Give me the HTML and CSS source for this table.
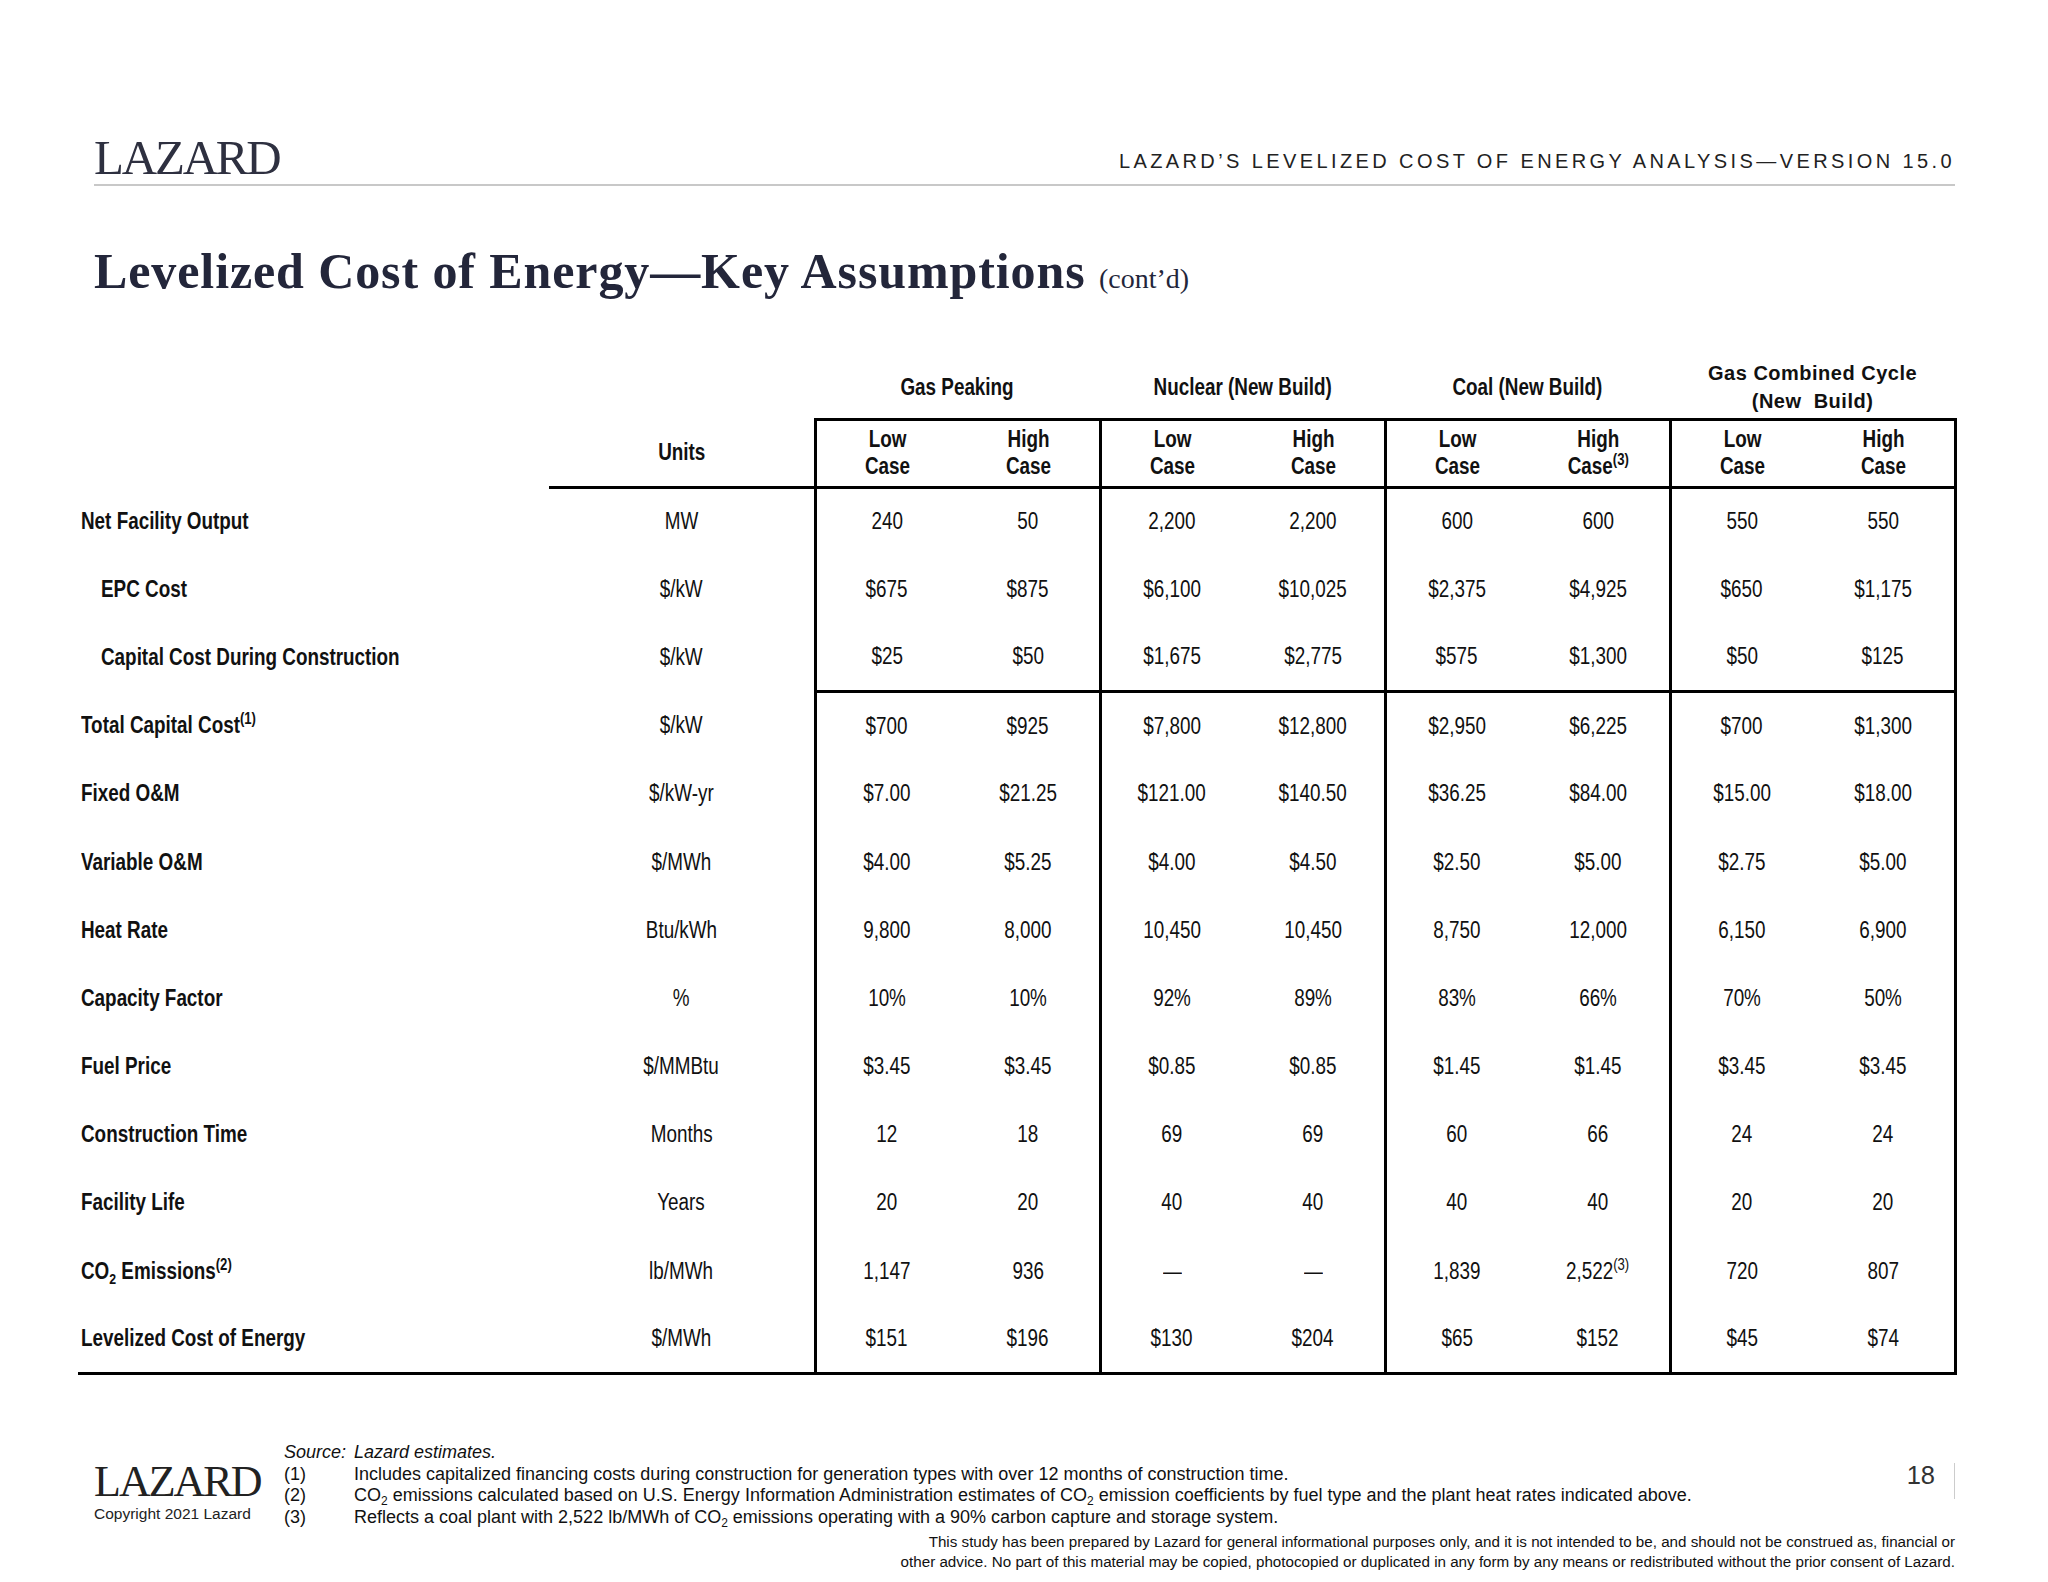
FILE: index.html
```html
<!DOCTYPE html>
<html lang="en">
<head>
<meta charset="utf-8">
<title>Levelized Cost of Energy—Key Assumptions (cont’d)</title>
<link rel="stylesheet" href="styles.css">
</head>
<body>
<div class="page">
  <header class="top">
    <div class="logo">LAZARD</div>
    <div class="doc-title">LAZARD’S LEVELIZED COST OF ENERGY ANALYSIS—VERSION 15.0</div>
  </header>

  <h1 class="title">Levelized Cost of Energy—Key Assumptions <span class="contd">(cont’d)</span></h1>

  <table class="assump">
    <colgroup>
      <col class="c-label">
      <col class="c-unit">
      <col class="c-val" span="8">
    </colgroup>
    <thead>
      <tr class="grp">
        <th></th>
        <th></th>
        <th colspan="2"><span>Gas Peaking</span></th>
        <th colspan="2"><span>Nuclear (New Build)</span></th>
        <th colspan="2"><span>Coal (New Build)</span></th>
        <th colspan="2" class="gcc">Gas Combined Cycle<br>(New&nbsp; Build)</th>
      </tr>
      <tr class="sub">
        <th class="blank"></th>
        <th class="units"><span>Units</span></th>
        <th><span>Low<br>Case</span></th>
        <th><span>High<br>Case</span></th>
        <th><span>Low<br>Case</span></th>
        <th><span>High<br>Case</span></th>
        <th><span>Low<br>Case</span></th>
        <th><span>High<br>Case<sup>(3)</sup></span></th>
        <th><span>Low<br>Case</span></th>
        <th><span>High<br>Case</span></th>
      </tr>
    </thead>
    <tbody>
      <tr>
        <td class="lbl"><span>Net Facility Output</span></td><td><span>MW</span></td>
        <td><span>240</span></td><td><span>50</span></td><td><span>2,200</span></td><td><span>2,200</span></td><td><span>600</span></td><td><span>600</span></td><td><span>550</span></td><td><span>550</span></td>
      </tr>
      <tr>
        <td class="lbl ind"><span>EPC Cost</span></td><td><span>$/kW</span></td>
        <td><span>$675</span></td><td><span>$875</span></td><td><span>$6,100</span></td><td><span>$10,025</span></td><td><span>$2,375</span></td><td><span>$4,925</span></td><td><span>$650</span></td><td><span>$1,175</span></td>
      </tr>
      <tr class="sep">
        <td class="lbl ind"><span>Capital Cost During Construction</span></td><td><span>$/kW</span></td>
        <td><span>$25</span></td><td><span>$50</span></td><td><span>$1,675</span></td><td><span>$2,775</span></td><td><span>$575</span></td><td><span>$1,300</span></td><td><span>$50</span></td><td><span>$125</span></td>
      </tr>
      <tr>
        <td class="lbl"><span>Total Capital Cost<sup>(1)</sup></span></td><td><span>$/kW</span></td>
        <td><span>$700</span></td><td><span>$925</span></td><td><span>$7,800</span></td><td><span>$12,800</span></td><td><span>$2,950</span></td><td><span>$6,225</span></td><td><span>$700</span></td><td><span>$1,300</span></td>
      </tr>
      <tr>
        <td class="lbl"><span>Fixed O&amp;M</span></td><td><span>$/kW-yr</span></td>
        <td><span>$7.00</span></td><td><span>$21.25</span></td><td><span>$121.00</span></td><td><span>$140.50</span></td><td><span>$36.25</span></td><td><span>$84.00</span></td><td><span>$15.00</span></td><td><span>$18.00</span></td>
      </tr>
      <tr>
        <td class="lbl"><span>Variable O&amp;M</span></td><td><span>$/MWh</span></td>
        <td><span>$4.00</span></td><td><span>$5.25</span></td><td><span>$4.00</span></td><td><span>$4.50</span></td><td><span>$2.50</span></td><td><span>$5.00</span></td><td><span>$2.75</span></td><td><span>$5.00</span></td>
      </tr>
      <tr>
        <td class="lbl"><span>Heat Rate</span></td><td><span>Btu/kWh</span></td>
        <td><span>9,800</span></td><td><span>8,000</span></td><td><span>10,450</span></td><td><span>10,450</span></td><td><span>8,750</span></td><td><span>12,000</span></td><td><span>6,150</span></td><td><span>6,900</span></td>
      </tr>
      <tr>
        <td class="lbl"><span>Capacity Factor</span></td><td><span>%</span></td>
        <td><span>10%</span></td><td><span>10%</span></td><td><span>92%</span></td><td><span>89%</span></td><td><span>83%</span></td><td><span>66%</span></td><td><span>70%</span></td><td><span>50%</span></td>
      </tr>
      <tr>
        <td class="lbl"><span>Fuel Price</span></td><td><span>$/MMBtu</span></td>
        <td><span>$3.45</span></td><td><span>$3.45</span></td><td><span>$0.85</span></td><td><span>$0.85</span></td><td><span>$1.45</span></td><td><span>$1.45</span></td><td><span>$3.45</span></td><td><span>$3.45</span></td>
      </tr>
      <tr>
        <td class="lbl"><span>Construction Time</span></td><td><span>Months</span></td>
        <td><span>12</span></td><td><span>18</span></td><td><span>69</span></td><td><span>69</span></td><td><span>60</span></td><td><span>66</span></td><td><span>24</span></td><td><span>24</span></td>
      </tr>
      <tr>
        <td class="lbl"><span>Facility Life</span></td><td><span>Years</span></td>
        <td><span>20</span></td><td><span>20</span></td><td><span>40</span></td><td><span>40</span></td><td><span>40</span></td><td><span>40</span></td><td><span>20</span></td><td><span>20</span></td>
      </tr>
      <tr>
        <td class="lbl"><span>CO<sub>2</sub> Emissions<sup>(2)</sup></span></td><td><span>lb/MWh</span></td>
        <td><span>1,147</span></td><td><span>936</span></td><td><span>—</span></td><td><span>—</span></td><td><span>1,839</span></td><td><span>2,522<sup>(3)</sup></span></td><td><span>720</span></td><td><span>807</span></td>
      </tr>
      <tr>
        <td class="lbl"><span>Levelized Cost of Energy</span></td><td><span>$/MWh</span></td>
        <td><span>$151</span></td><td><span>$196</span></td><td><span>$130</span></td><td><span>$204</span></td><td><span>$65</span></td><td><span>$152</span></td><td><span>$45</span></td><td><span>$74</span></td>
      </tr>
    </tbody>
  </table>

  <footer class="foot">
    <div class="brand">
      <div class="logo-sm">LAZARD</div>
      <div class="copy">Copyright 2021 Lazard</div>
    </div>
    <div class="notes">
      <div class="note src"><span class="n">Source:</span><span class="t">Lazard estimates.</span></div>
      <div class="note"><span class="n">(1)</span><span class="t">Includes capitalized financing costs during construction for generation types with over 12 months of construction time.</span></div>
      <div class="note"><span class="n">(2)</span><span class="t">CO<sub>2</sub> emissions calculated based on U.S. Energy Information Administration estimates of CO<sub>2</sub> emission coefficients by fuel type and the plant heat rates indicated above.</span></div>
      <div class="note"><span class="n">(3)</span><span class="t">Reflects a coal plant with 2,522 lb/MWh of CO<sub>2</sub> emissions operating with a 90% carbon capture and storage system.</span></div>
    </div>
    <div class="pnum">18</div>
    <p class="disc">This study has been prepared by Lazard for general informational purposes only, and it is not intended to be, and should not be construed as, financial or<br>other advice. No part of this material may be copied, photocopied or duplicated in any form by any means or redistributed without the prior consent of Lazard.</p>
  </footer>
</div>
</body>
</html>
```

FILE: styles.css
```css
* { box-sizing: border-box; }
html, body { margin: 0; background: #fff; }
body {
  width: 2048px;
  height: 1582px;
  overflow: hidden;
  font-family: "Liberation Sans", Arial, sans-serif;
  color: #111;
}
.page { padding: 0 93px 0 78px; }

/* header */
.top {
  margin-left: 16px;
  height: 186px;
  padding-top: 133px;
  display: flex;
  justify-content: space-between;
  align-items: flex-start;
  border-bottom: 2px solid #c8c8c8;
}
.logo {
  font-family: "Liberation Serif", "Times New Roman", serif;
  font-size: 49px;
  line-height: 49px;
  letter-spacing: -2.2px;
  color: #2e3040;
}
.doc-title {
  margin-top: 18px;
  font-size: 20px;
  line-height: 20px;
  letter-spacing: 3.4px;
  color: #222;
}

/* title */
.title {
  margin: 55px 0 0 16px;
  font-family: "Liberation Serif", "Times New Roman", serif;
  font-weight: bold;
  font-size: 50px;
  line-height: 60px;
  letter-spacing: 0.9px;
  color: #23263a;
}
.contd { font-weight: normal; font-size: 28px; letter-spacing: 0; }

/* table */
.assump {
  margin-top: 48px;
  width: 1877px;
  border-collapse: collapse;
  table-layout: fixed;
  font-family: "Liberation Sans", Arial, sans-serif;
  font-size: 23px;
  color: #111;
}
.c-label { width: 471px; }
.c-unit { width: 266px; }
.c-val { width: 142.5px; }
.assump th, .assump td {
  padding: 0;
  text-align: center;
  vertical-align: middle;
  white-space: nowrap;
}
/* condensed (Arial Narrow–like) cell text */
.assump th > span, .assump td > span {
  display: inline-block;
  transform: scaleX(0.82);
  transform-origin: center center;
}
.assump td.lbl > span { transform-origin: left center; }
.grp th {
  height: 62px;
  font-weight: bold;
  line-height: 28px;
}
.grp th.gcc {
  font-size: 20px;
  letter-spacing: 0.5px;
}
.sub th {
  height: 68px;
  font-weight: bold;
  line-height: 27px;
}
.sub th:nth-child(n+3) { border-top: 3px solid #000; }
.sub th:nth-child(n+2) { border-bottom: 3px solid #000; }
.sub th:nth-child(3), .sub th:nth-child(5), .sub th:nth-child(7), .sub th:nth-child(9),
tbody td:nth-child(3), tbody td:nth-child(5), tbody td:nth-child(7), tbody td:nth-child(9) {
  border-left: 3px solid #000;
}
.sub th:nth-child(10), tbody td:nth-child(10) { border-right: 3px solid #000; }
tbody td { height: 68.2px; }
tbody tr.sep td:nth-child(n+3) { border-bottom: 3px solid #000; }
tbody tr:last-child td { border-bottom: 3px solid #000; }
td.lbl {
  text-align: left;
  padding-left: 3px;
  font-weight: bold;
}
td.lbl.ind { padding-left: 23px; }
.assump sup {
  font-size: 16px;
  line-height: 0;
  vertical-align: 9px;
}
.assump sub {
  font-size: 15px;
  line-height: 0;
  vertical-align: -5px;
}

/* footer */
.foot {
  margin: 67px 0 0 16px;
  display: grid;
  grid-template-columns: 190px 1fr auto;
  align-items: start;
}
.brand { padding-top: 18px; }
.logo-sm {
  font-family: "Liberation Serif", "Times New Roman", serif;
  font-size: 44px;
  line-height: 44px;
  letter-spacing: -2px;
  color: #222;
}
.copy {
  margin-top: 1px;
  font-size: 15.5px;
  line-height: 18px;
  color: #222;
}
.notes {
  font-size: 18px;
  line-height: 21.7px;
  color: #111;
}
.note { display: flex; }
.note .n { width: 70px; flex: none; }
.note.src { font-style: italic; }
.notes sub { font-size: 12px; line-height: 0; vertical-align: -4px; }
.pnum {
  margin-top: 21px;
  height: 36px;
  padding-right: 19px;
  border-right: 1px solid #ccc;
  font-size: 25.5px;
  line-height: 24px;
  color: #333;
}
.disc {
  grid-column: 1 / -1;
  margin: 3px 0 0;
  text-align: right;
  font-size: 15.2px;
  line-height: 20px;
  color: #111;
}
```
